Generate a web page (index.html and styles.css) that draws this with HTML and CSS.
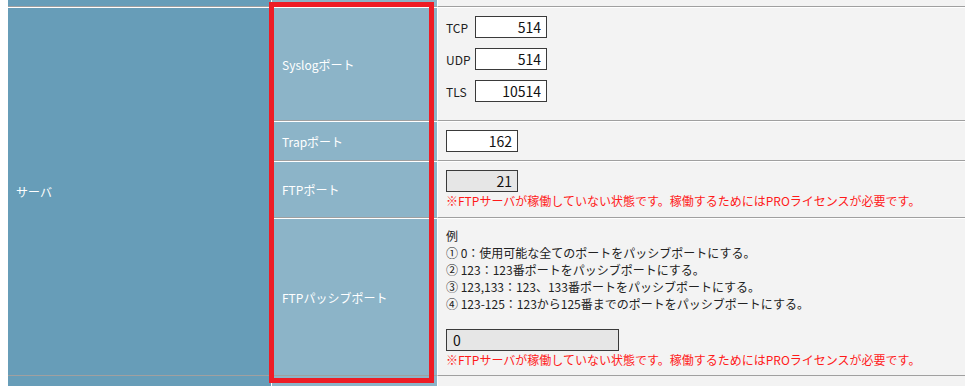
FILE: index.html
```html
<!DOCTYPE html>
<html lang="ja">
<head>
<meta charset="UTF-8" />
<meta name="viewport" content="width=device-width, initial-scale=1" />
<title>サーバ設定</title>
<link rel="stylesheet" href="styles.css">
</head>
<body>

<table class="settings">
  <tr class="edge-row">
    <td class="group-col"></td>
    <td class="label-col"></td>
    <td class="value-col"></td>
  </tr>
  <tr>
    <th class="group" rowspan="4">サーバ</th>
    <th class="label">Syslogポート</th>
    <td class="value">
      <div class="port-line"><span class="proto">TCP</span><input class="port" type="text" value="514"></div>
      <div class="port-line"><span class="proto">UDP</span><input class="port" type="text" value="514"></div>
      <div class="port-line"><span class="proto">TLS</span><input class="port" type="text" value="10514"></div>
    </td>
  </tr>
  <tr>
    <th class="label">Trapポート</th>
    <td class="value">
      <input class="port" type="text" value="162">
    </td>
  </tr>
  <tr>
    <th class="label">FTPポート</th>
    <td class="value">
      <input class="port" type="text" value="21" disabled>
      <div class="note">※FTPサーバが稼働していない状態です。稼働するためにはPROライセンスが必要です。</div>
    </td>
  </tr>
  <tr>
    <th class="label">FTPパッシブポート</th>
    <td class="value passive">
      <div class="examples">
        例<br>
        ① 0：使用可能な全てのポートをパッシブポートにする。<br>
        ② 123：123番ポートをパッシブポートにする。<br>
        ③ 123,133：123、133番ポートをパッシブポートにする。<br>
        ④ 123-125：123から125番までのポートをパッシブポートにする。
      </div>
      <input class="port wide" type="text" value="0" disabled>
      <div class="note">※FTPサーバが稼働していない状態です。稼働するためにはPROライセンスが必要です。</div>
    </td>
  </tr>
  <tr class="edge-row bottom">
    <td></td>
    <td class="label-col"></td>
    <td class="value-col"></td>
  </tr>
</table>

<div class="highlight"></div>

</body>
</html>
```

FILE: styles.css
```css
body {
  margin: 0 0 0 8px;
  background: #fff;
  font-family: "Noto Sans CJK JP", "Noto Sans", sans-serif;
  font-size: 12px;
  color: #222;
  overflow: hidden;
}
.settings {
  width: 957px;
  table-layout: fixed;
  border-collapse: separate;
  border-spacing: 0;
}
.settings th, .settings td {
  padding: 0;
  font-weight: normal;
  text-align: left;
  border-top: 1px solid #fff;
  border-bottom: 1px solid #a0a0a0;
}
.settings td.value, .settings th.label, .label-col, .value-col {
  border-left: 1px solid #fff;
}
.edge-row td {
  height: 6px;
  border-top: none;
}
.edge-row.bottom td {
  height: 20px;
  border-bottom: none;
}
.group-col { width: 263px; }
.label-col { width: 165px; }
.group, .edge-row td:first-child {
  background: #679db8;
}
.label, .label-col {
  background: #8cb4c8;
}
.value, .value-col {
  background: #f3f3f3;
}
.settings th.group {
  color: #fff;
  padding-left: 8px;
  vertical-align: middle;
}
.settings th.label {
  color: #fff;
  padding-left: 10px;
  vertical-align: middle;
}
.settings td.value {
  padding: 8px;
  vertical-align: top;
  line-height: 17px;
}
.settings td.passive {
  padding-bottom: 7px;
}
.port-line {
  display: flex;
  align-items: center;
  height: 22px;
  margin-bottom: 10px;
}
.proto {
  width: 29px;
}
.port {
  display: block;
  box-sizing: border-box;
  width: 72px;
  height: 22px;
  margin: 0;
  padding: 0 5px 0 4px;
  border: 1px solid #3a3a3a;
  background: #fff;
  color: #111;
  font-family: "Noto Sans CJK JP", "Noto Sans", sans-serif;
  font-size: 14px;
  text-align: right;
}
.port:disabled {
  background: #e6e6e6;
  color: #111;
}
.port.wide {
  width: 173px;
  padding-left: 6px;
  text-align: left;
}
.examples {
  margin-bottom: 17px;
}
.note {
  color: #ff1a1a;
}
.highlight {
  position: absolute;
  left: 269px;
  top: 2px;
  width: 155px;
  height: 371px;
  border: 5px solid #ee1c25;
  pointer-events: none;
}
```
